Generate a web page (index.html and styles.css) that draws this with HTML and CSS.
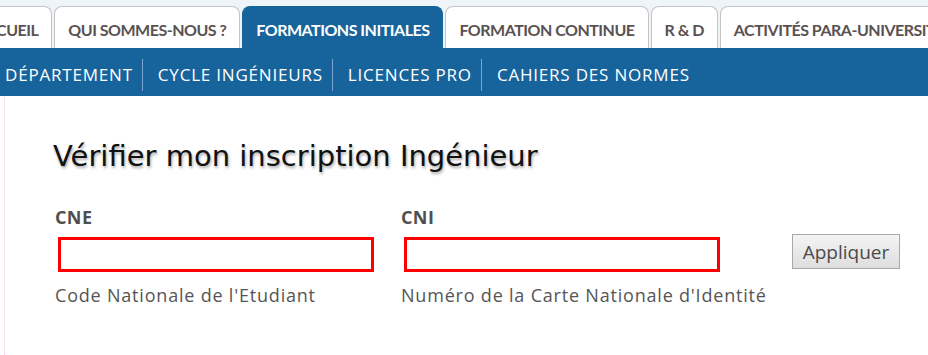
FILE: index.html
```html
<!DOCTYPE html>
<html lang="fr">
<head>
<meta charset="utf-8">
<title>Vérifier mon inscription</title>
<link rel="stylesheet" href="styles.css">
</head>
<body>
<header class="header">
  <nav class="tabs">
    <a class="tab tab-first">ACCUEIL</a>
    <a class="tab">QUI SOMMES-NOUS ?</a>
    <a class="tab tab-active">FORMATIONS INITIALES</a>
    <a class="tab">FORMATION CONTINUE</a>
    <a class="tab">R &amp; D</a>
    <a class="tab">ACTIVITÉS PARA-UNIVERSITAIRES</a>
  </nav>
  <nav class="subnav">
    <a class="sub sub-first">PAR DÉPARTEMENT</a>
    <a class="sub">CYCLE INGÉNIEURS</a>
    <a class="sub">LICENCES PRO</a>
    <a class="sub">CAHIERS DES NORMES</a>
  </nav>
</header>
<main class="content">
  <h1 class="title">Vérifier mon inscription Ingénieur</h1>
  <form class="form">
    <div class="field">
      <label class="label">CNE</label>
      <input class="input" type="text">
      <div class="help">Code Nationale de l'Etudiant</div>
    </div>
    <div class="field">
      <label class="label">CNI</label>
      <input class="input" type="text">
      <div class="help">Numéro de la Carte Nationale d'Identité</div>
    </div>
    <div class="action">
      <button class="btn" type="button">Appliquer</button>
    </div>
  </form>
</main>
</body>
</html>
```
FILE: styles.css
```css
html, body {
  margin: 0;
  padding: 0;
  background: #ffffff;
}
body {
  width: 928px;
  height: 355px;
  overflow: hidden;
}
.header {
  overflow: hidden;
}
.tabs {
  display: flex;
  align-items: flex-end;
  gap: 2px;
  height: 48px;
  background: #eef4f8;
  margin-left: -38px;
  white-space: nowrap;
}
.tab {
  display: block;
  height: 41px;
  line-height: 46px;
  padding: 0 13px;
  background: #ffffff;
  border: 1px solid #c3c3c8;
  border-bottom: none;
  border-radius: 8px 8px 0 0;
  font-family: "Lato", "Open Sans", sans-serif;
  font-weight: 700;
  font-size: 16px;
  letter-spacing: -0.5px;
  color: #5a5252;
  flex: none;
}
.tab-active {
  background: #17649c;
  border-color: #17649c;
  color: #ffffff;
}
.subnav {
  display: flex;
  align-items: center;
  height: 48px;
  box-sizing: border-box;
  padding-top: 6px;
  background: #17649c;
  margin-left: -49px;
  white-space: nowrap;
}
.sub {
  display: block;
  padding: 0 9px 0 15px;
  line-height: 32px;
  border-left: 1px solid #7aa3cf;
  font-family: "Open Sans", sans-serif;
  font-size: 17px;
  letter-spacing: 0.8px;
  color: #ffffff;
  flex: none;
}
.sub-first {
  border-left: none;
}
.content {
  margin-left: 4px;
  border-left: 1px dotted #f3c6ea;
  height: 259px;
  box-sizing: border-box;
  padding: 42px 0 0 50px;
}
.title {
  margin: 0 0 0 -2px;
  font-family: "DejaVu Sans", sans-serif;
  font-weight: 400;
  font-size: 29px;
  line-height: 36px;
  color: #111111;
  text-shadow: 1px 2px 3px #a8a8a8;
}
.form {
  display: flex;
  align-items: flex-start;
  margin-top: 31px;
}
.field {
  width: 346px;
  flex: none;
}
.label {
  display: block;
  font-family: "Open Sans", sans-serif;
  font-weight: 700;
  font-size: 18px;
  line-height: 24px;
  letter-spacing: 0.4px;
  color: #4f4f4f;
  margin-bottom: 8px;
}
.input {
  display: block;
  box-sizing: border-box;
  width: 316px;
  height: 35px;
  margin: 0 0 0 3px;
  border: 3px solid #ff0000;
  background: #ffffff;
  outline: none;
}
.help {
  margin-top: 11px;
  font-family: "Open Sans", sans-serif;
  font-size: 18px;
  line-height: 24px;
  letter-spacing: 0.8px;
  color: #555555;
  white-space: nowrap;
}
.action {
  padding-top: 29px;
  margin-left: 45px;
}
.btn {
  display: block;
  width: 108px;
  height: 35px;
  border: 1px solid #a9a9a9;
  background: linear-gradient(#f4f4f4, #dedede);
  font-family: "Open Sans", sans-serif;
  font-size: 19px;
  color: #4b4b4b;
  padding: 0;
}
```
